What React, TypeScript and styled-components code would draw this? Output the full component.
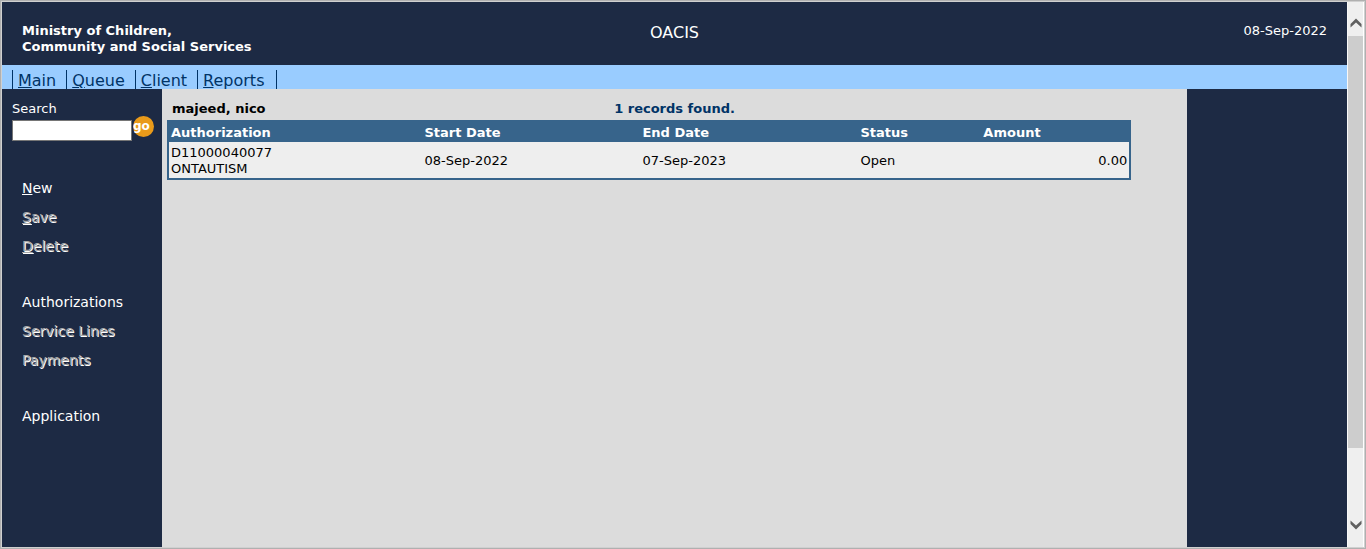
import React from 'react';
import styled, { createGlobalStyle, css } from 'styled-components';

const navy = '#1d2a44';
const steel = '#37648b';

const GlobalStyle = createGlobalStyle`
  * { box-sizing: border-box; }
  body {
    margin: 0;
    font-family: Verdana, "DejaVu Sans", sans-serif;
    font-size: 13px;
    line-height: 16px;
  }
`;

const Frame = styled.div`
  display: flex;
  min-height: 100vh;
  border: 1px solid #b0b0b0;
  background: #d0d0d0;
  padding: 1px;
`;

const Page = styled.div`
  flex: 1;
  min-width: 0;
  display: flex;
  flex-direction: column;
`;

const Header = styled.header`
  display: grid;
  grid-template-columns: 1fr auto 1fr;
  padding: 21px 20px 10px;
  background: ${navy};
  color: #fff;
`;

const Ministry = styled.div`
  font-weight: bold;
`;

const AppName = styled.h1`
  margin: 0;
  font-size: 16px;
  font-weight: normal;
  line-height: 20px;
`;

const Today = styled.div`
  text-align: right;
`;

const Nav = styled.nav`
  display: flex;
  height: 24px;
  padding: 5px 10px 0;
  background: #99ccff;
`;

const NavLink = styled.a`
  padding: 0 10px 0 5px;
  border-left: 1px solid #003366;
  color: #003366;
  font-size: 16px;
  line-height: 21px;
  text-decoration: none;

  &:last-child {
    padding-right: 12px;
    border-right: 1px solid #003366;
  }
`;

const Body = styled.div`
  flex: 1;
  display: flex;
  background: ${navy};
`;

const Sidebar = styled.aside`
  width: 160px;
  color: #fff;
`;

const SearchForm = styled.form`
  padding: 12px 0 0 10px;
`;

const SearchLabel = styled.label`
  display: block;
`;

const SearchRow = styled.div`
  display: flex;
  align-items: flex-start;
  gap: 1px;
  margin-top: -1px;
`;

const SearchInput = styled.input`
  width: 120px;
  height: 21px;
  margin-top: 4px;
  padding: 0 3px;
  border: 1px solid #767676;
  background: #fff;
  font: inherit;
`;

const GoButton = styled.button`
  width: 21px;
  height: 21px;
  padding: 0 0 2px;
  border: 0;
  border-radius: 50%;
  background: #e99a1a;
  color: #fff;
  font: bold 12px/18px Verdana, "DejaVu Sans", sans-serif;
  text-align: left;
`;

const Menu = styled.div`
  display: flex;
  flex-direction: column;
  align-items: flex-start;
  gap: 27px;
  padding: 32px 20px 0;
`;

const MenuGroup = styled.div`
  display: flex;
  flex-direction: column;
  align-items: flex-start;
`;

const MenuButton = styled.button`
  height: 29px;
  padding: 0;
  border: 0;
  background: none;
  color: #fff;
  font: 14px/18px Verdana, "DejaVu Sans", sans-serif;
  white-space: nowrap;

  ${({ disabled }) => disabled && css`
    color: #a8a8a8;
    text-shadow: 1px 1px 0 #fff;
  `}
`;

const Main = styled.main`
  flex: 1;
  min-width: 0;
  padding: 12px 5px 0;
  background: #dcdcdc;
`;

const Summary = styled.div`
  display: grid;
  grid-template-columns: 44% 1fr;
  padding: 0 5px 3px;
  font-weight: bold;
`;

const RecordCount = styled.span`
  color: #003366;
`;

const Table = styled.table`
  width: 95%;
  table-layout: fixed;
  border: 2px solid ${steel};
  border-spacing: 0;
  background: #eee;
`;

const HeadCell = styled.th<{ $width: string }>`
  width: ${({ $width }) => $width};
  padding: 3px 2px 1px;
  background: ${steel};
  color: #fff;
  text-align: left;
`;

const Cell = styled.td<{ $right?: boolean }>`
  padding: 3px 2px 1px;
  text-align: ${({ $right }) => ($right ? 'right' : 'left')};
`;

const Margin = styled.aside`
  width: 160px;
`;

const ScrollRail = styled.div`
  display: flex;
  flex-direction: column;
  align-items: center;
  width: 17px;
  border-right: 1px solid #fff;
  border-left: 1px solid #f8f8f8;
  background: #efefef;
`;

const ScrollTrack = styled.div`
  flex: 1;
  align-self: stretch;
`;

const ScrollThumb = styled.div`
  height: 87%;
  background: #cdcdcd;
`;

const ScrollButton = styled.button<{ $down?: boolean }>`
  display: flex;
  align-items: center;
  justify-content: center;
  height: ${({ $down }) => ($down ? '38px' : '34px')};
  padding: ${({ $down }) => ($down ? '0 0 6px' : '8px 0 0')};
  border: 0;
  background: none;
`;

const Chevron = ({ down }: { down?: boolean }) => (
  <svg width="12" height="10" viewBox="0 0 12 10" aria-hidden="true">
    <path
      d={down ? 'M0.5 0.5L6 5.5L11.5 0.5V4L6 9.5L0.5 4Z' : 'M0.5 9.5L6 4.5L11.5 9.5V6L6 0.5L0.5 6Z'}
      fill="#606060"
    />
  </svg>
);

type Item = { label: string; accessKey?: boolean; disabled?: boolean };

const navItems = ['Main', 'Queue', 'Client', 'Reports'];

const menuGroups: Item[][] = [
  [
    { label: 'New', accessKey: true },
    { label: 'Save', accessKey: true, disabled: true },
    { label: 'Delete', accessKey: true, disabled: true },
  ],
  [
    { label: 'Authorizations' },
    { label: 'Service Lines', disabled: true },
    { label: 'Payments', disabled: true },
  ],
  [{ label: 'Application' }],
];

const KeyLabel = ({ text }: { text: string }) => (
  <>
    <u>{text[0]}</u>
    {text.slice(1)}
  </>
);

export default function App() {
  return (
    <>
      <GlobalStyle />
      <Frame>
        <Page>
          <Header>
            <Ministry>
              Ministry of Children,
              <br />
              Community and Social Services
            </Ministry>
            <AppName>OACIS</AppName>
            <Today>08-Sep-2022</Today>
          </Header>
          <Nav>
            {navItems.map((item) => (
              <NavLink key={item} href="#">
                <KeyLabel text={item} />
              </NavLink>
            ))}
          </Nav>
          <Body>
            <Sidebar>
              <SearchForm onSubmit={(e) => e.preventDefault()}>
                <SearchLabel htmlFor="search">Search</SearchLabel>
                <SearchRow>
                  <SearchInput id="search" type="text" />
                  <GoButton type="submit">go</GoButton>
                </SearchRow>
              </SearchForm>
              <Menu>
                {menuGroups.map((group) => (
                  <MenuGroup key={group[0].label}>
                    {group.map(({ label, accessKey, disabled }) => (
                      <MenuButton key={label} type="button" disabled={disabled}>
                        {accessKey ? <KeyLabel text={label} /> : label}
                      </MenuButton>
                    ))}
                  </MenuGroup>
                ))}
              </Menu>
            </Sidebar>
            <Main>
              <Summary>
                <span>majeed, nico</span>
                <RecordCount>1 records found.</RecordCount>
              </Summary>
              <Table>
                <thead>
                  <tr>
                    <HeadCell $width="26.4%">Authorization</HeadCell>
                    <HeadCell $width="22.7%">Start Date</HeadCell>
                    <HeadCell $width="22.7%">End Date</HeadCell>
                    <HeadCell $width="12.8%">Status</HeadCell>
                    <HeadCell $width="15.4%">Amount</HeadCell>
                  </tr>
                </thead>
                <tbody>
                  <tr>
                    <Cell>
                      D11000040077
                      <br />
                      ONTAUTISM
                    </Cell>
                    <Cell>08-Sep-2022</Cell>
                    <Cell>07-Sep-2023</Cell>
                    <Cell>Open</Cell>
                    <Cell $right>0.00</Cell>
                  </tr>
                </tbody>
              </Table>
            </Main>
            <Margin />
          </Body>
        </Page>
        <ScrollRail>
          <ScrollButton type="button" aria-label="Scroll up">
            <Chevron />
          </ScrollButton>
          <ScrollTrack>
            <ScrollThumb />
          </ScrollTrack>
          <ScrollButton type="button" aria-label="Scroll down" $down>
            <Chevron down />
          </ScrollButton>
        </ScrollRail>
      </Frame>
    </>
  );
}
